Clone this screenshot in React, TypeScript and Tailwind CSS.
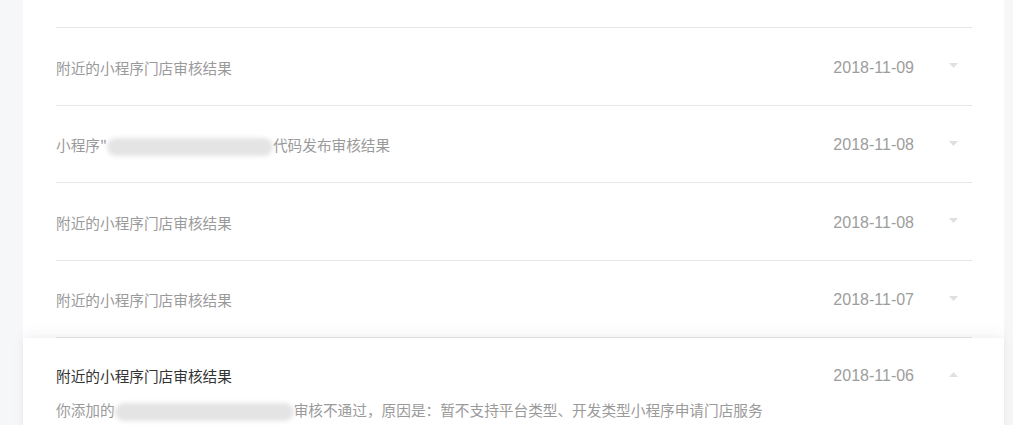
import React from "react";

type Item = {
  date: string;
  title: React.ReactNode;
};

const cjk = "font-['Microsoft_YaHei','Noto_Sans_CJK_SC',sans-serif]";

function Blur({ w }: { w: number }) {
  return (
    <span className="relative inline-block align-middle h-[20px]" style={{ width: w }}>
      <span className="absolute inset-x-0 top-[1px] h-[18px] rounded-full bg-[#e4e4e4] blur-[2px]" />
    </span>
  );
}

function Caret({ up }: { up?: boolean }) {
  return (
    <svg width="9" height="5" viewBox="0 0 9 5" className="text-[#e0e0e0]">
      {up ? <path d="M0 5 L4.5 0 L9 5 Z" fill="currentColor" /> : <path d="M0 0 L9 0 L4.5 5 Z" fill="currentColor" />}
    </svg>
  );
}

const items: Item[] = [
  { date: "2018-11-09", title: "附近的小程序门店审核结果" },
  {
    date: "2018-11-08",
    title: (
      <>
        小程序"
        <Blur w={166} />
        代码发布审核结果
      </>
    ),
  },
  { date: "2018-11-08", title: "附近的小程序门店审核结果" },
  { date: "2018-11-07", title: "附近的小程序门店审核结果" },
];

function Row({ item }: { item: Item }) {
  return (
    <div className="flex items-center h-[77.5px] border-b border-[#e7e7e7] pt-[3px]">
      <div className={`flex-1 text-[14.667px] text-[#9a9a9a] ${cjk} whitespace-nowrap`}>{item.title}</div>
      <div className="text-base text-[#9d9d9d] font-['Liberation_Sans',sans-serif]">{item.date}</div>
      <div className="w-[58px] flex justify-end pr-[14px] pb-[4px]">
        <Caret />
      </div>
    </div>
  );
}

export default function App() {
  return (
    <div className="w-[1013px] h-[425px] overflow-hidden bg-[#f6f7f9] flex pl-[23px] pr-[9px]">
      <div className="flex-1 bg-white px-[33px] pr-[32px]">
        <div className="h-[28px] border-b border-[#e7e7e7]" />
        {items.map((it, i) => (
          <Row key={i} item={it} />
        ))}

        {/* Expanded item */}
        <div className="-mx-[33px] -mr-[32px] px-[33px] pr-[32px] bg-white shadow-[0_-6px_14px_rgba(0,0,0,0.035),0_0_6px_rgba(0,0,0,0.04)]">
          <div className="flex items-center pt-[26px]">
            <div className={`flex-1 text-[14.667px] text-[#333] ${cjk}`}>附近的小程序门店审核结果</div>
            <div className="text-base text-[#9d9d9d] font-['Liberation_Sans',sans-serif]">2018-11-06</div>
            <div className="w-[58px] flex justify-end pr-[14px] pb-[3px]">
              <Caret up />
            </div>
          </div>
          <div className={`mt-[11px] text-[14.667px] text-[#9a9a9a] ${cjk} whitespace-nowrap`}>
            你添加的
            <Blur w={179} />
            审核不通过，原因是：暂不支持平台类型、开发类型小程序申请门店服务
          </div>
          <div className="h-[40px]" />
        </div>
      </div>
    </div>
  );
}
